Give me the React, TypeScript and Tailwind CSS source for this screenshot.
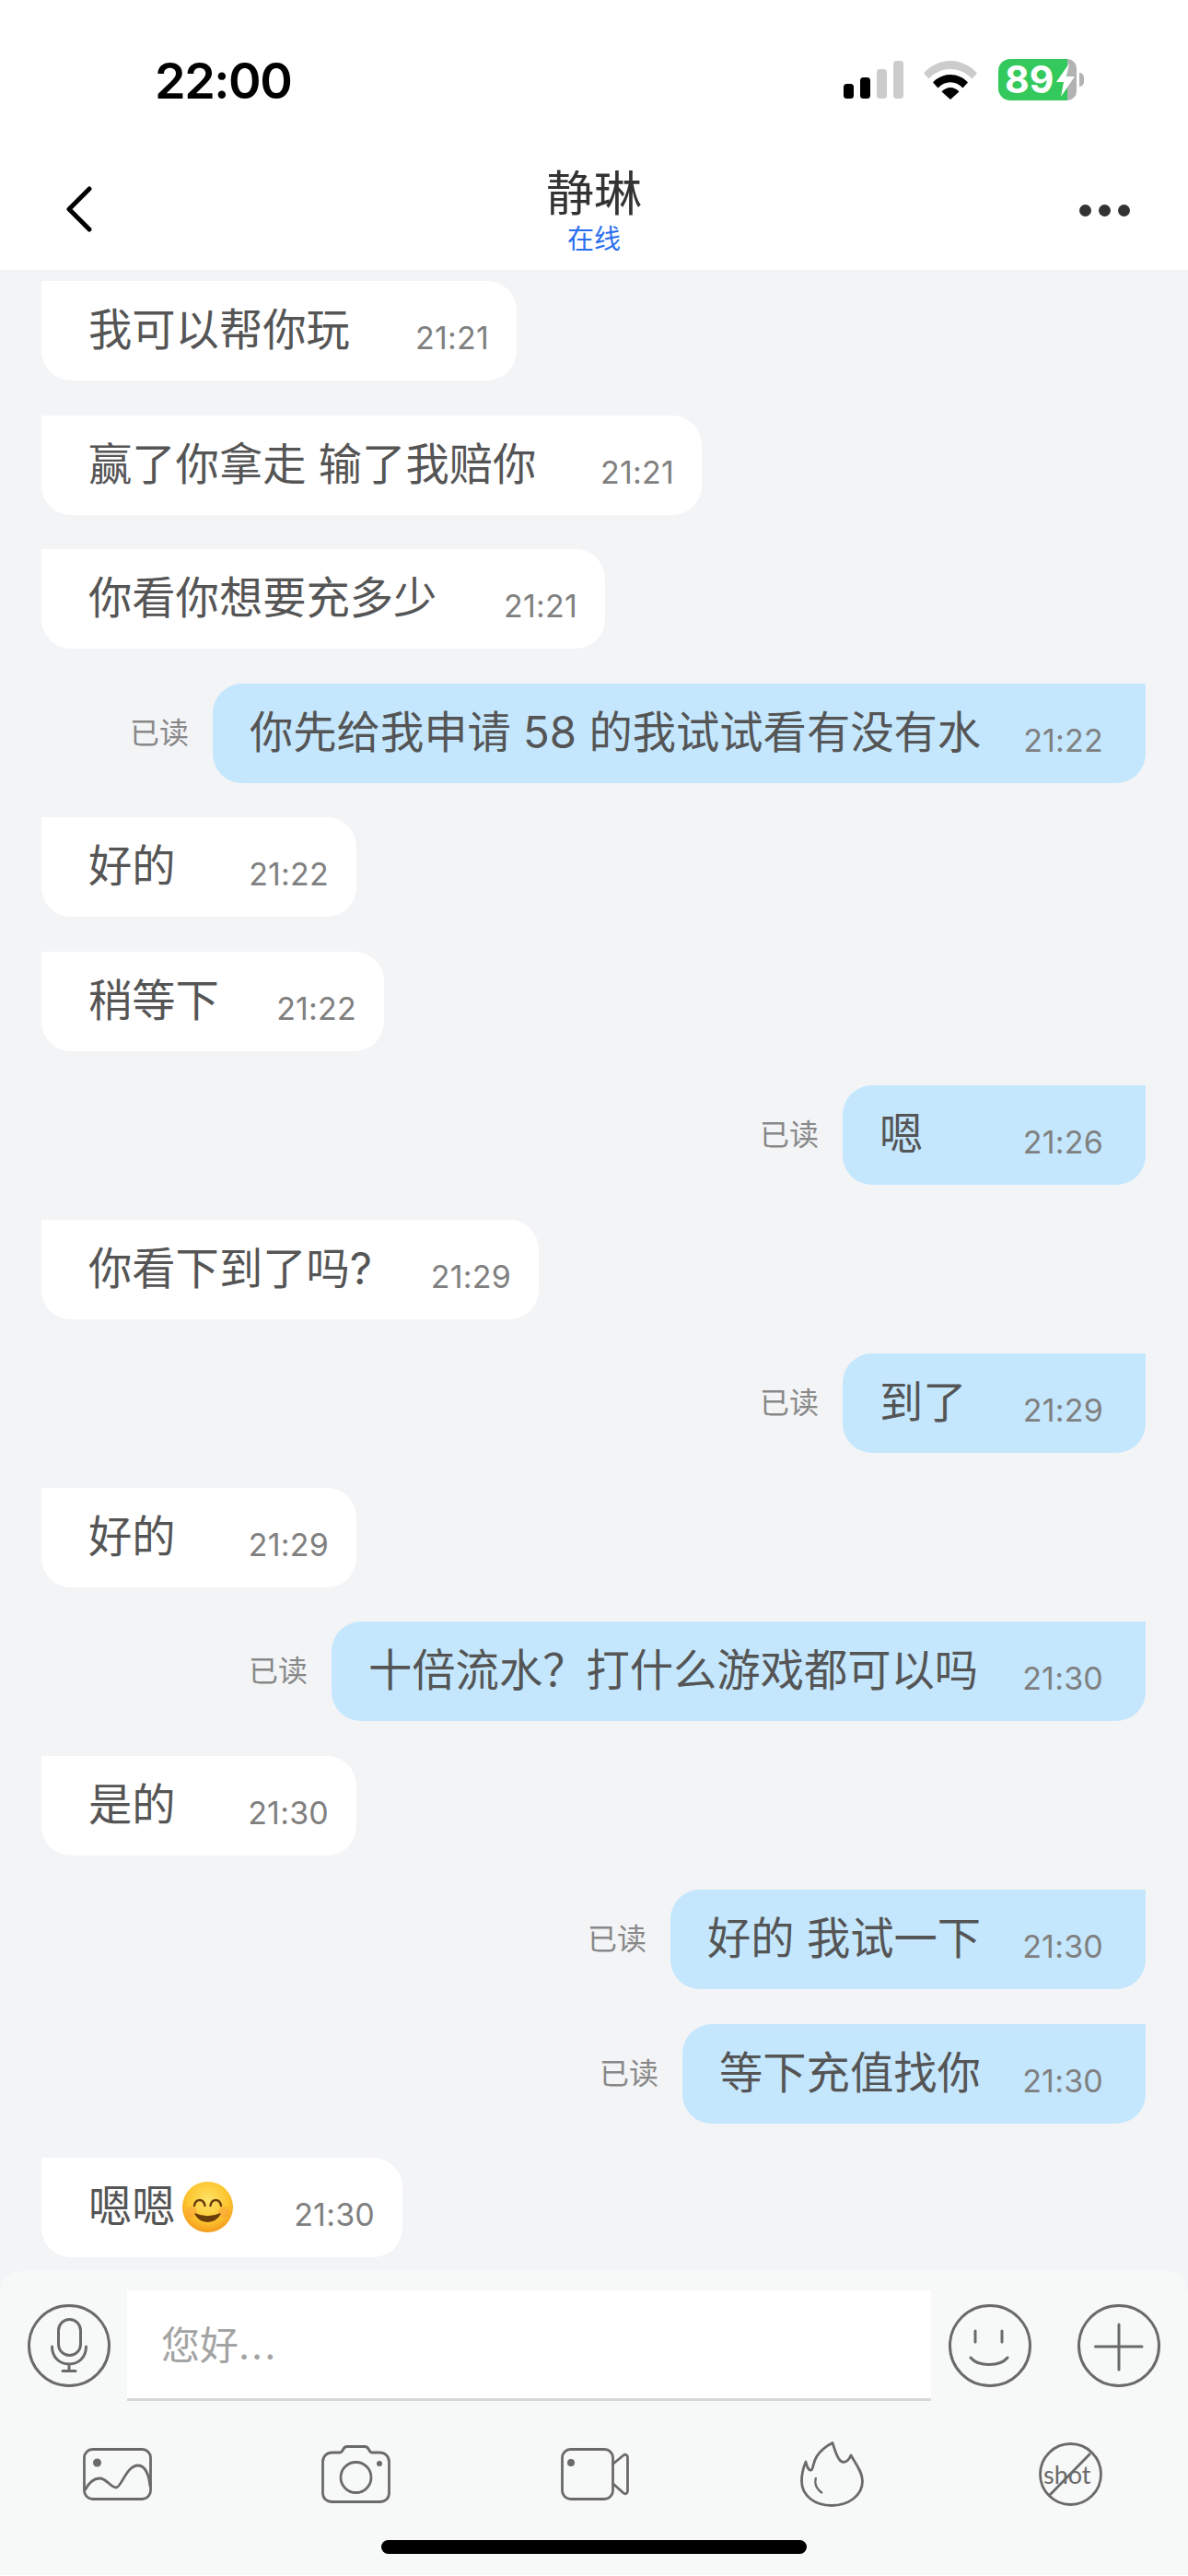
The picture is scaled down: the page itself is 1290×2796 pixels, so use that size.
type Message = {
  text: string;
  time: string;
  mine?: boolean;
  width: string;
  emoji?: boolean;
};

const messages: Message[] = [
  { text: "我可以帮你玩", time: "21:21", width: "w-[516px]" },
  { text: "赢了你拿走 输了我赔你", time: "21:21", width: "w-[717px]" },
  { text: "你看你想要充多少", time: "21:21", width: "w-[612px]" },
  { text: "你先给我申请 58 的我试试看有没有水", time: "21:22", mine: true, width: "w-[1013px]" },
  { text: "好的", time: "21:22", width: "w-[342px]" },
  { text: "稍等下", time: "21:22", width: "w-[372px]" },
  { text: "嗯", time: "21:26", mine: true, width: "w-[329px]" },
  { text: "你看下到了吗?", time: "21:29", width: "w-[540px]" },
  { text: "到了", time: "21:29", mine: true, width: "w-[329px]" },
  { text: "好的", time: "21:29", width: "w-[342px]" },
  { text: "十倍流水？打什么游戏都可以吗", time: "21:30", mine: true, width: "w-[884px]" },
  { text: "是的", time: "21:30", width: "w-[342px]" },
  { text: "好的 我试一下", time: "21:30", mine: true, width: "w-[516px]" },
  { text: "等下充值找你", time: "21:30", mine: true, width: "w-[503px]" },
  { text: "嗯嗯", time: "21:30", width: "w-[392px]", emoji: true },
];

function SmileEmoji() {
  return (
    <svg aria-hidden viewBox="0 0 55 55" className="ml-[7px] h-[55px] w-[55px] shrink-0">
      <defs>
        <radialGradient id="face" cx="50%" cy="38%" r="62%">
          <stop offset="0%" stopColor="#ffe36a" />
          <stop offset="65%" stopColor="#fdc62f" />
          <stop offset="100%" stopColor="#f39a1c" />
        </radialGradient>
      </defs>
      <circle cx="27.5" cy="27.5" r="27.5" fill="url(#face)" />
      <circle cx="10" cy="33" r="6" fill="#fb9a3c" opacity="0.45" />
      <circle cx="45" cy="33" r="6" fill="#fb9a3c" opacity="0.45" />
      <path d="M13 26c1.500-8 10-8 11.500 0M30.500 26c1.500-8 10-8 11.500 0" fill="none" stroke="#6b3d0c" strokeWidth="2.4" strokeLinecap="round" />
      <path d="M14 35c6 11 21 11 27 0-8 4-19 4-27 0Z" fill="#6b3d0c" stroke="#6b3d0c" strokeWidth="1.500" strokeLinejoin="round" />
    </svg>
  );
}

function Bubble({ message }: { message: Message }) {
  const { mine, text, time, width, emoji } = message;
  return (
    <div className={mine ? "flex items-center justify-end" : "flex items-center justify-start"}>
      {mine ? <span className="mr-[26px] text-[32px] leading-none text-[#888888]">已读</span> : null}
      <div
        className={[
          "flex h-[108px] items-center justify-between",
          width,
          mine
            ? "rounded-[32px] rounded-tr-none bg-[#c4e7fe] pl-[40px] pr-[46px]"
            : "rounded-[32px] rounded-tl-none bg-white pl-[51px] pr-[30px]",
        ].join(" ")}
      >
        <span className="mb-[2px] flex items-center whitespace-pre text-[47.3px] leading-none text-[#555555]">
          {text}
          {emoji ? <SmileEmoji /> : null}
        </span>
        <span className="mb-[-16px] text-[34px] leading-none tracking-[0.2px] text-[#808080]">{time}</span>
      </div>
    </div>
  );
}

function StatusIcons() {
  return (
    <div className="flex items-center">
      <svg aria-hidden viewBox="0 0 65 41" className="h-[41px] w-[65px]">
        <rect x="0" y="25" width="11" height="16" rx="3.5" fill="#000" />
        <rect x="18" y="18" width="11" height="23" rx="3.5" fill="#000" />
        <rect x="36" y="9" width="11" height="32" rx="3.5" fill="#cccccc" />
        <rect x="54" y="0" width="11" height="41" rx="3.5" fill="#cccccc" />
      </svg>
      <svg aria-hidden viewBox="0 0 58 42" className="ml-[22px] h-[42px] w-[58px]">
        <path d="M0 13.5C16-4.500 42-4.500 58 13.500L52.500 19.500C39.500 5.500 18.500 5.500 5.500 19.500Z" fill="#cccccc" />
        <path d="M10 23.500C20 12 38 12 48 23.500L42.500 29.500C34.500 21 23.500 21 15.500 29.500Z" fill="#000" />
        <path d="M19.500 33.500C25 27.500 33 27.500 38.500 33.500L29 42Z" fill="#000" />
      </svg>
      <div className="relative ml-[23px] flex h-[45px] w-[85px]">
        <div className="flex h-full w-[75px] items-center rounded-l-[13px] bg-[#34c95c] pl-[7px] text-[41px] font-bold leading-none text-white">
          89
        </div>
        <div className="h-full w-[10px] rounded-r-[13px] bg-[#b2b2b2]" />
        <svg aria-hidden viewBox="0 0 22 36" className="absolute left-[62px] top-[5px] h-[36px] w-[22px]">
          <path d="M15 0 1 20h8L6 36 21 14h-9Z" fill="#fff" />
        </svg>
      </div>
      <div className="ml-[3px] h-[15px] w-[5px] rounded-r-full bg-[#b2b2b2]" />
    </div>
  );
}

function CircleIcon({ children }: { children: React.ReactNode }) {
  return (
    <svg
      aria-hidden
      viewBox="0 0 90 90"
      className="mt-[15px] h-[90px] w-[90px] shrink-0"
      fill="none"
      stroke="#6a6a6a"
      strokeWidth="3"
      strokeLinecap="round"
    >
      <circle cx="45" cy="45" r="43.500" />
      {children}
    </svg>
  );
}

function Composer() {
  return (
    <div className="flex h-[330px] flex-col rounded-t-[24px] bg-[#f7f8f8] pt-[21px]">
      <div className="flex items-start pl-[30px]">
        <CircleIcon>
          <rect x="33.500" y="16.500" width="24" height="39" rx="12" />
          <path d="M26.500 46C26.500 58 35 65 45 65C55 65 63.500 58 63.500 46M45 65V72M38 72.500H52" />
        </CircleIcon>
        <div className="ml-[18px] flex h-[120px] w-[873px] items-center border-b-[3px] border-[#d8d8d8] bg-white pl-[37px] pt-[2px] text-[42px] text-[#a3a3a3]">
          您好<span className="tracking-[2px]">...</span>
        </div>
        <div className="ml-[19px]">
          <CircleIcon>
            <path d="M29 29V41M58 29V41M24 58C32 68 56 68 64 58" />
          </CircleIcon>
        </div>
        <div className="ml-[50px]">
          <CircleIcon>
            <path d="M45 22V71M19.500 46H70" />
          </CircleIcon>
        </div>
      </div>
      <div className="mt-[42px] flex h-[75px] items-center pl-[90px]">
        <svg aria-hidden viewBox="0 0 75 57" className="h-[57px] w-[75px]" fill="none" stroke="#6a6a6a" strokeWidth="2.800">
          <rect x="1.500" y="1.500" width="72" height="54" rx="9" />
          <circle cx="15.500" cy="16" r="4.500" fill="#6a6a6a" stroke="none" />
          <path d="M2 46C7 37 12 33 18 33C26 33 30 43 36 43C42 43 47 19 60 19C68 19 72 30 73 42" />
        </svg>
        <svg aria-hidden viewBox="0 0 75 63" className="ml-[184px] h-[63px] w-[75px]" fill="none" stroke="#6a6a6a" strokeWidth="2.800">
          <path d="M12 8H20C22 8 23 6 24 4C25 2 26 1.500 28 1.500H47C49 1.500 50 2 51 4C52 6 53 8 55 8H63C69 8 73.500 12 73.500 18V52C73.500 58 69 61.500 63 61.500H12C6 61.500 1.500 58 1.500 52V18C1.500 12 6 8 12 8Z" />
          <circle cx="37.500" cy="35" r="16.500" />
          <circle cx="63" cy="20" r="3" fill="#6a6a6a" stroke="none" />
        </svg>
        <svg aria-hidden viewBox="0 0 74 57" className="ml-[185px] h-[57px] w-[74px]" fill="none" stroke="#6a6a6a" strokeWidth="2.800" strokeLinejoin="round">
          <rect x="1.500" y="1.500" width="55" height="54" rx="9" />
          <circle cx="11" cy="16" r="4" fill="#6a6a6a" stroke="none" />
          <path d="M57 17L68 8C70 6.500 72.500 7.500 72.500 10V47C72.500 49.500 70 50.500 68 49L57 39" />
        </svg>
        <svg aria-hidden viewBox="0 0 69 71" className="ml-[186px] h-[71px] w-[69px]" fill="none" stroke="#6a6a6a" strokeWidth="2.800" strokeLinejoin="round">
          <path d="M35 1.500C37 8 39 15 42 19C45 24 51 24 55 15C60 24 67.500 33 67.500 43C67.500 59 52 69.500 34 69.500C16 69.500 1.500 59 1.500 43C1.500 36 3 29 6 22C7 27 9 32 12 31C14 30 14 22 18 16C22 10 28 5 35 1.500Z" />
          <path d="M17 39C15 46 18 52 24 56" strokeWidth="2.200" />
        </svg>
        <svg aria-hidden viewBox="0 0 69 69" className="ml-[190px] h-[69px] w-[69px]" fill="none" stroke="#6a6a6a" strokeWidth="2.800">
          <circle cx="34.500" cy="34.500" r="33" />
          <path d="M56 12L12 57" />
          <text x="5" y="45" fontSize="27" fontFamily="Lato, sans-serif" fill="#6a6a6a" stroke="none">
            shot
          </text>
        </svg>
      </div>
      <div className="mx-auto mt-[34px] h-[15px] w-[462px] rounded-full bg-black" />
    </div>
  );
}

export default function App() {
  return (
    <div className="flex h-[2796px] w-[1290px] flex-col overflow-hidden bg-white [font-family:Inter,'Noto_Sans_CJK_SC',sans-serif]">
      <div className="flex h-[130px] shrink-0 items-start justify-between pl-[168px] pr-[113px] pt-[64px]">
        <span className="text-[54px] font-semibold leading-[48px] tracking-[-1.5px] text-black">22:00</span>
        <StatusIcons />
      </div>
      <div className="grid h-[163px] shrink-0 grid-cols-[1fr_auto_1fr] items-start px-[63px]">
        <svg aria-hidden viewBox="0 0 28 50" className="ml-[9px] mt-[72px] h-[50px] w-[28px]" fill="none" stroke="#000" strokeWidth="5" strokeLinecap="round" strokeLinejoin="round">
          <path d="M25 3 3 25l22 22" />
        </svg>
        <div className="flex flex-col items-center pt-[51px]">
          <span className="text-[52px] leading-[60px] text-[#333333]">静琳</span>
          <span className="mt-[2px] text-[29px] leading-[34px] text-[#2a6ff0]">在线</span>
        </div>
        <div className="mt-[92px] flex gap-[8px] justify-self-end">
          <span className="h-[13px] w-[13px] rounded-full bg-[#333333]" />
          <span className="h-[13px] w-[13px] rounded-full bg-[#333333]" />
          <span className="h-[13px] w-[13px] rounded-full bg-[#333333]" />
        </div>
      </div>
      <div className="flex h-[2172px] shrink-0 flex-col gap-[37.5px] overflow-hidden bg-[#f3f4f6] pl-[45px] pr-[46px] pt-[12px]">
        {messages.map((message, index) => (
          <Bubble key={index} message={message} />
        ))}
      </div>
      <div className="bg-[#f3f4f6]">
        <Composer />
      </div>
    </div>
  );
}
